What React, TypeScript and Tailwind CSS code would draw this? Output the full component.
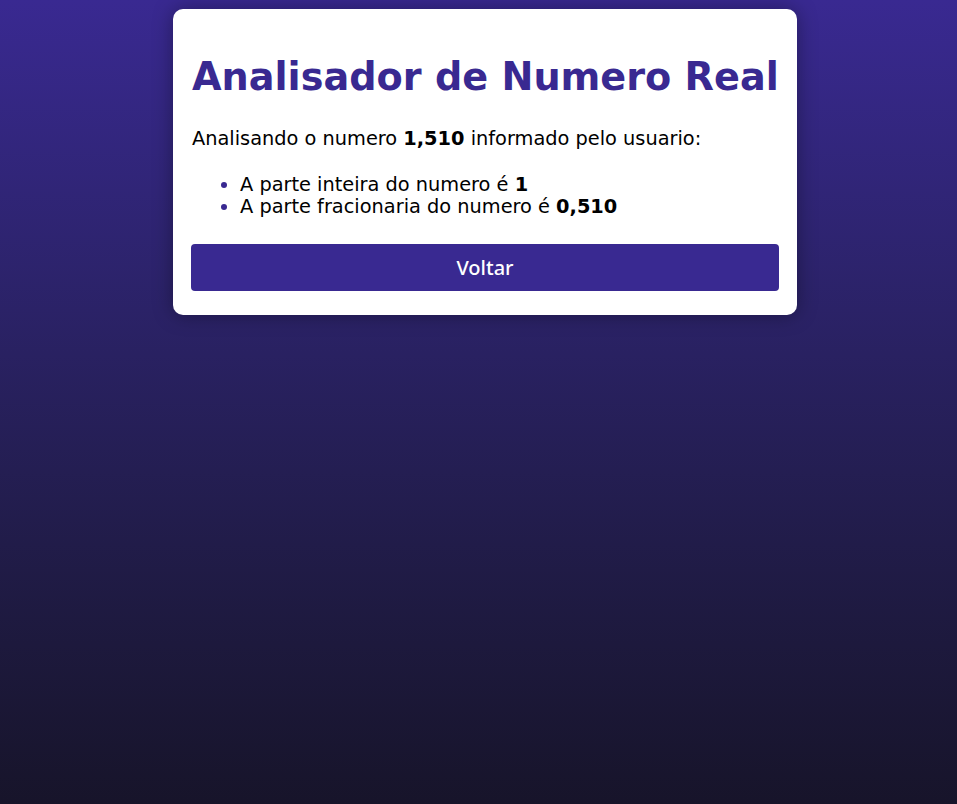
export default function App() {
  return (
    <div className="min-h-[804px] w-full bg-gradient-to-b from-[#392991] to-[#17142a] pl-[13px] pt-[9px] flex justify-center items-start font-['DejaVu_Sans',sans-serif]">
      <main className="w-[624px] bg-white rounded-[10px] px-[18px] pt-[46px] pb-[24px] shadow-[0_0_20px_rgba(0,0,0,0.35)]">
        <h1 className="text-[38.2px] leading-[45px] font-bold text-[#392991] whitespace-nowrap pl-px">
          Analisador de Numero Real
        </h1>
        <p className="mt-[27px] text-[19.35px] leading-[23px] text-black pl-px">
          Analisando o numero <strong>1,510</strong> informado pelo usuario:
        </p>
        <ul className="mt-[24px] list-disc pl-[49px] text-[19.35px] leading-[22px] text-black marker:text-[#392991]">
          <li>
            A parte inteira do numero é <strong>1</strong>
          </li>
          <li>
            A parte fracionaria do numero é <strong>0,510</strong>
          </li>
        </ul>
        <button className="mt-[26px] w-full h-[47px] rounded-[4px] bg-[#392991] text-white text-[20px] font-medium font-['Noto_Sans',sans-serif]">
          Voltar
        </button>
      </main>
    </div>
  );
}
